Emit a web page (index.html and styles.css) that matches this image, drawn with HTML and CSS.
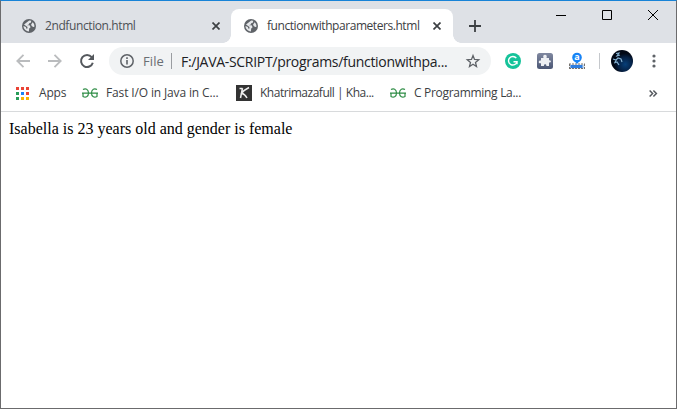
FILE: index.html
```
<!DOCTYPE html>
<html lang="en">
<head>
<meta charset="utf-8">
<title>functionwithparameters.html</title>
<link rel="stylesheet" href="styles.css">
</head>
<body>
<svg class="defs" width="0" height="0" aria-hidden="true">
  <symbol id="globe" viewBox="0 0 14 14"><circle cx="7" cy="7" r="7" fill="#5f6368"/><path d="M7.200 1.500 9.300 1.800 8.800 3.700 7.200 4.200 6.800 5.500 5 6.200H7.600L8.600 8.200 7.200 9.600 6.900 12.400C3.500 12.200 1.500 9.600 1.500 7L3.900 8.100 4.200 9.400 5.300 9.700 5.500 8 2 5.500ZM10.700 3.200C12 4.500 12.600 6 12.400 7.800L11.200 8.100 9.700 6.900 9.100 5.600Z" fill="#e4e6e9"/></symbol>
  <symbol id="cross" viewBox="0 0 8 8"><path d="m.5.5 7 7m0-7-7 7" fill="none" stroke="#3c4043" stroke-width="1.700"/></symbol>
  <symbol id="gfg" viewBox="0 0 16 10"><path d="M1 1.500C3.500 0 6.500 1 6.500 5S3.500 10 1 8.500V5.200M15 1.500C12.500 0 9.500 1 9.500 5S12.500 10 15 8.500V5.200M0 5.200H16" fill="none" stroke="#2f8d46" stroke-width="1.200"/></symbol>
</svg>
<div class="window">
  <header class="tabs">
    <div class="tab first"><svg class="globe"><use href="#globe"/></svg><span class="tab-name one">2ndfunction.html</span><svg class="cross"><use href="#cross"/></svg></div>
    <div class="tab active"><svg class="globe"><use href="#globe"/></svg><span class="tab-name two">functionwithparameters.html</span><svg class="cross"><use href="#cross"/></svg></div>
    <svg class="plus" viewBox="0 0 12 12"><path d="M6 0v12M0 6h12" stroke="#3c4043" stroke-width="1.800"/></svg>
    <div class="controls">
      <svg viewBox="0 0 10 10"><path d="M0 5.500H10" stroke="#000"/></svg>
      <svg viewBox="0 0 10 10"><path d="M.5.5h9v9h-9z" fill="none" stroke="#000"/></svg>
      <svg viewBox="0 0 10 10"><path d="m0 0 10 10M10 0 0 10" stroke="#000"/></svg>
    </div>
  </header>
  <nav class="toolbar">
    <svg class="arrow back" viewBox="0 0 14 14"><path d="M14 7H1.500M7.500.8 1.300 7l6.200 6.200" fill="none" stroke="#babcbe" stroke-width="1.800"/></svg>
    <svg class="arrow forward" viewBox="0 0 14 14"><path d="M0 7h12.500M6.500.8 12.700 7l-6.200 6.200" fill="none" stroke="#babcbe" stroke-width="1.800"/></svg>
    <svg class="arrow reload" viewBox="0 0 14 14"><path d="M11.700 3.200A6 6 0 1 0 12.800 8.700" fill="none" stroke="#54585d" stroke-width="2"/><path d="M14 0v6H8z" fill="#54585d"/></svg>
    <div class="address">
      <svg class="info" viewBox="0 0 14 14"><circle cx="7" cy="7" r="6.200" fill="none" stroke="#5f6368" stroke-width="1.500"/><path d="M7 6v4.600M7 3.300v1.600" stroke="#5f6368" stroke-width="1.600"/></svg>
      <span class="scheme">File</span><i class="bar"></i><span class="url">F:/JAVA-SCRIPT/programs/functionwithpa...</span>
      <svg class="star" viewBox="0 0 14 14"><path d="m7 1.500 1.500 3.900 4.200.3-3.200 2.700 1 4.100L7 10.300l-3.500 2.200 1-4.100-3.200-2.700 4.200-.3z" fill="none" stroke="#5f6368" stroke-width="1.300"/></svg>
    </div>
    <svg class="ext" viewBox="0 0 16 16"><circle cx="8" cy="8" r="8" fill="#15c39a"/><path d="M11.300 5.200A4.300 4.300 0 1 0 12 8.800H8.500M12 8.300v3" fill="none" stroke="#fff" stroke-width="1.400"/></svg>
    <svg class="ext" viewBox="0 0 16 16"><defs><linearGradient id="slate" x2="0" y2="1"><stop stop-color="#8088a0"/><stop offset="1" stop-color="#4b5775"/></linearGradient></defs><rect width="16" height="16" rx="2.500" fill="url(#slate)"/><path d="M4 5h2.500C5.700 2.800 6.700 1.800 8 1.800s2.300 1 1.500 3.200H12v2.300c2.600-1 2.600 3 0 2.200V13H9.300c.7-2.300-2.900-2.300-2.300 0H4v-2.800c-3 .8-3-3.400 0-2.700z" fill="#eef0f4"/></svg>
    <svg class="ext" viewBox="0 0 16 16"><path d="M.5 11.500h15v4H.5z" fill="#c9d8ea"/><path d="M1.500 12h12v3h-12z" fill="#2d7de0"/><path d="M0 11h16M0 15.500h16M.5 11v5M15.500 11v5" stroke="#77736e" stroke-dasharray="2 1"/><path d="m5.500 8 2.500 3 2.500-3z" fill="#1683f6"/><circle cx="8" cy="4.500" r="4.800" fill="#1683f6"/><text x="8" y="7.300" text-anchor="middle" class="letter-a">a</text></svg>
    <i class="divider"></i>
    <svg class="avatar" viewBox="0 0 22 22"><defs><radialGradient id="night" cx=".65" cy=".65"><stop stop-color="#073f79"/><stop offset=".65" stop-color="#052044"/><stop offset="1" stop-color="#020815"/></radialGradient></defs><circle cx="11" cy="11" r="11" fill="url(#night)"/><path d="M5 3.500 8 3 6 6l3-1M2 9l3 1 2-2 3 1 1 3M3 13l3-1 2 3M6 9l-2 3" fill="none" stroke="#86b2d2" stroke-width="1.200"/></svg>
    <svg class="more" viewBox="0 0 4 14"><g fill="#5f6368"><circle cx="2" cy="2" r="1.600"/><circle cx="2" cy="7" r="1.600"/><circle cx="2" cy="12" r="1.600"/></g></svg>
  </nav>
  <nav class="bookmarks">
    <svg class="apps" viewBox="0 0 13 13"><g fill="#ea4335"><path d="M0 0h3v3H0zM5 0h3v3H5zM10 0h3v3h-3zM10 5h3v3h-3z"/></g><path d="M0 5h3v3H0zM0 10h3v3H0z" fill="#279c58"/><path d="M5 5h3v3H5z" fill="#1a82f7"/><path d="M5 10h3v3H5zM10 10h3v3h-3z" fill="#fbb300"/></svg>
    <span class="label apps-label">Apps</span>
    <svg class="gfg"><use href="#gfg"/></svg><span class="label fast">Fast I/O in Java in C...</span>
    <svg class="k" viewBox="0 0 16 16"><path d="M0 0h16v16H0z" fill="#333"/><path d="M6.500 3 4.500 13M13 2.500Q8 5 5.500 8.300q3.500.7 5.500 4.700M3.500 3.500h3" fill="none" stroke="#eee" stroke-width="1.500"/></svg><span class="label khat">Khatrimazafull | Kha...</span>
    <svg class="gfg"><use href="#gfg"/></svg><span class="label cprog">C Programming La...</span>
    <svg class="overflow" viewBox="0 0 8 7"><path d="m.6.5 3 3-3 3m3.800-6 3 3-3 3" fill="none" stroke="#54585d" stroke-width="1.500"/></svg>
  </nav>
  <main>Isabella is 23 years old and gender is female</main>
</div>
</body>
</html>
```
FILE: styles.css
```
* { box-sizing: border-box; }
body { margin: 0; background: #fff; }
svg { display: block; flex: none; overflow: visible; }
.defs { position: absolute; }
.window { width: 677px; height: 409px; border: 1px solid #6b6b6d; border-top-color: #1883d7; overflow: hidden; font-family: "Open Sans", sans-serif; color: #3c4043; }
.tabs { height: 42px; background: #dee1e6; display: flex; align-items: flex-start; }
.tab { display: flex; align-items: center; height: 34px; margin-top: 8px; position: relative; }
.first { width: 230px; padding-left: 21px; }
.active { width: 222px; padding-left: 13px; background: #fff; border-radius: 8px 8px 0 0; }
.active::before, .active::after { content: ""; position: absolute; bottom: 0; width: 8px; height: 8px; }
.active::before { left: -8px; background: radial-gradient(circle at 0 0, transparent 7.5px, #fff 8px); }
.active::after { right: -8px; background: radial-gradient(circle at 100% 0, transparent 7.5px, #fff 8px); }
.globe { width: 14px; height: 14px; }
.cross { width: 8px; height: 8px; }
.tab-name, .label, .url, .scheme { flex: none; white-space: nowrap; }
.tab-name { margin-left: 9px; font-size: 12px; line-height: 16px; }
.one { width: 167px; letter-spacing: -.4px; color: #4c5055; }
.two { width: 166px; letter-spacing: -.44px; }
.plus { width: 12px; height: 12px; margin: 19px 0 0 16px; }
.controls { display: flex; gap: 36px; margin: 9px 0 0 75px; }
.controls svg { width: 10px; height: 10px; }
.toolbar { height: 36px; display: flex; align-items: center; padding-left: 15px; }
.arrow { width: 14px; height: 14px; margin-right: 18px; }
.reload { margin-right: 15px; }
.address { width: 382px; height: 28px; border-radius: 14px; background: #f1f3f4; display: flex; align-items: center; padding-left: 11px; margin-right: 14px; }
.info { width: 14px; height: 14px; }
.scheme { width: 27px; margin-left: 9px; font-size: 13px; letter-spacing: .1px; color: #6a6e73; }
.bar { width: 1px; height: 16px; margin-left: 1px; background: #9a9da1; }
.url { width: 285px; margin-left: 9px; font-size: 14px; letter-spacing: -.3px; color: #202124; }
.star { width: 14px; height: 14px; }
.ext { width: 16px; height: 16px; margin-right: 16px; }
.letter-a { font: bold 9px "Open Sans", sans-serif; fill: #fff; }
.divider { width: 1px; height: 16px; margin: 0 11px 0 -2px; background: #c5c8cc; }
.avatar { width: 22px; height: 22px; }
.more { width: 4px; height: 14px; margin-left: 19px; }
.bookmarks { height: 33px; display: flex; align-items: center; padding: 0 0 4px 15px; border-bottom: 1px solid #d8dadc; }
.apps { width: 13px; height: 13px; }
.label { font-size: 12px; line-height: 16px; }
.apps-label { width: 43px; margin-left: 10px; letter-spacing: -.2px; }
.gfg { width: 16px; height: 10px; }
.fast { width: 130px; margin-left: 8px; letter-spacing: -.14px; }
.k { width: 16px; height: 16px; }
.khat { width: 130px; margin-left: 8px; letter-spacing: -.48px; }
.cprog { width: 235px; margin-left: 8px; letter-spacing: -.3px; }
.overflow { width: 8px; height: 7px; }
main { padding: 8px; font: 16px/18px "Liberation Serif", serif; color: #000; }
```
